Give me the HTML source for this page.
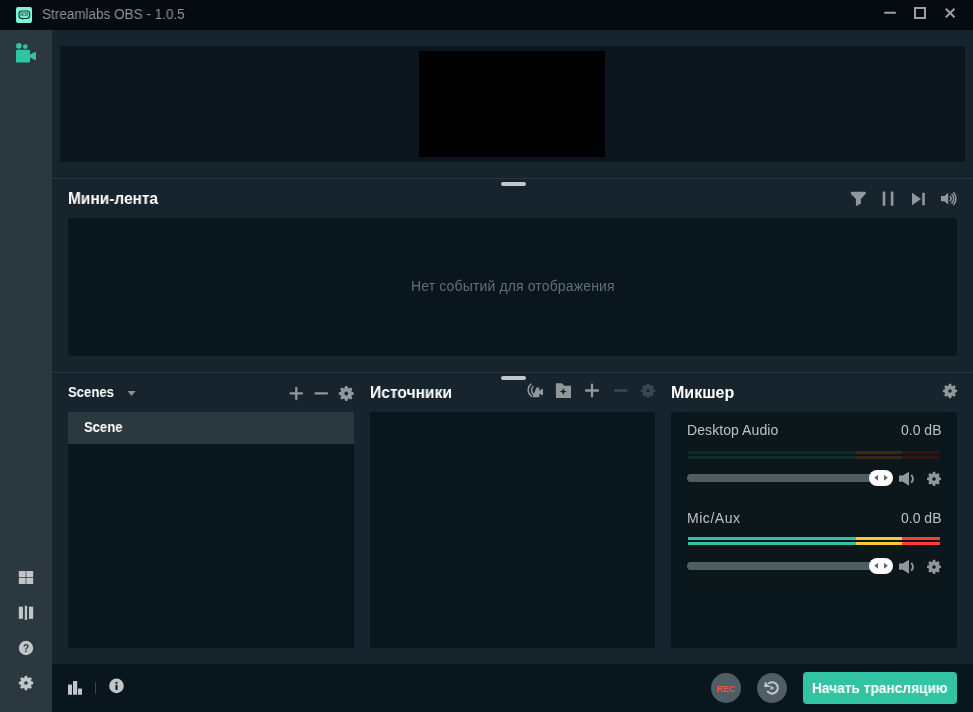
<!DOCTYPE html>
<html>
<head>
<meta charset="utf-8">
<title>Streamlabs OBS</title>
<style>
html,body{margin:0;padding:0;}
body{width:973px;height:712px;overflow:hidden;background:#17242d;font-family:"Liberation Sans",sans-serif;position:relative;color:#fff;}
.abs{position:absolute;}
.t{position:absolute;white-space:nowrap;line-height:1;transform-origin:0 50%;will-change:transform;}
#titlebar{left:0;top:0;width:973px;height:30px;background:#050b10;}
#sidebar{left:0;top:30px;width:52px;height:682px;background:#2b383f;}
#preview{left:60px;top:46px;width:905px;height:116px;background:#0b161c;}
#black{left:419px;top:51px;width:186px;height:106px;background:#000;}
.hline{left:52px;width:921px;height:1px;background:#2a363d;}
.handle{left:500.5px;width:25px;height:4px;border-radius:2px;background:#c2c7c9;}
.box{background:#09161d;border-radius:3px;}
#footer{left:52px;top:664px;width:921px;height:48px;background:#09161d;}
svg{position:absolute;overflow:visible;}
.ic{fill:#91979a;}
.icd{fill:#414d54;}
.icl{fill:#c0c5c7;}
</style>
</head>
<body>
<svg width="0" height="0" style="position:absolute">
<defs>
<path id="gear" fill-rule="evenodd" d="M-0.259 -0.693 L-0.131 -0.991 L0.131 -0.991 L0.259 -0.693 L0.307 -0.673 L0.609 -0.793 L0.793 -0.609 L0.673 -0.307 L0.693 -0.259 L0.991 -0.131 L0.991 0.131 L0.693 0.259 L0.673 0.307 L0.793 0.609 L0.609 0.793 L0.307 0.673 L0.259 0.693 L0.131 0.991 L-0.131 0.991 L-0.259 0.693 L-0.307 0.673 L-0.609 0.793 L-0.793 0.609 L-0.673 0.307 L-0.693 0.259 L-0.991 0.131 L-0.991 -0.131 L-0.693 -0.259 L-0.673 -0.307 L-0.793 -0.609 L-0.609 -0.793 L-0.307 -0.673Z M0.25 0 A0.25 0.25 0 1 0 -0.25 0 A0.25 0.25 0 1 0 0.25 0Z"/>
</defs>
</svg>

<!-- title bar -->
<div class="abs" id="titlebar"></div>
<div class="t" id="title" style="left:41.6px;top:7px;font-size:14px;color:#8e9497;transform:scaleX(0.965);">Streamlabs OBS - 1.0.5</div>

<!-- sidebar -->
<div class="abs" id="sidebar"></div>

<!-- preview -->
<div class="abs" id="preview"></div>
<div class="abs" id="black"></div>

<div class="abs hline" style="top:178px"></div>
<div class="abs handle" style="top:182px"></div>

<!-- mini feed -->
<div class="t" id="minititle" style="left:68.3px;top:191px;font-size:16px;font-weight:bold;transform:scaleX(0.966);">Мини-лента</div>
<div class="abs box" style="left:68px;top:218px;width:889px;height:138px;"></div>
<div class="t" id="noevents" style="left:410.5px;top:279px;font-size:14px;color:#646d72;letter-spacing:0.14px;">Нет событий для отображения</div>

<div class="abs hline" style="top:372px"></div>
<div class="abs handle" style="top:376px"></div>

<!-- scenes -->
<div class="t" id="scenes" style="left:67.8px;top:385px;font-size:14px;font-weight:bold;transform:scaleX(0.936);">Scenes</div>
<div class="abs box" style="left:68px;top:412px;width:286px;height:236px;border-radius:0;"></div>
<div class="abs" style="left:68px;top:412px;width:286px;height:32px;background:#2b383f;"></div>
<div class="t" id="scene" style="left:83.8px;top:420px;font-size:14px;font-weight:bold;transform:scaleX(0.932);">Scene</div>

<!-- sources -->
<div class="t" id="sources" style="left:370.2px;top:385px;font-size:16px;font-weight:bold;transform:scaleX(0.975);">Источники</div>
<div class="abs box" style="left:370px;top:412px;width:285px;height:236px;border-radius:0;"></div>

<!-- mixer -->
<div class="t" id="mixer" style="left:671.3px;top:385px;font-size:16px;font-weight:bold;transform:scaleX(0.995);">Микшер</div>
<div class="abs box" style="left:671px;top:412px;width:286px;height:236px;"></div>
<div class="abs" style="left:688px;top:412px;width:252px;height:176px;background:#0c171c;"></div>

<!-- mixer items -->
<div class="t" id="da" style="left:686.7px;letter-spacing:0.08px;top:423px;font-size:14px;color:#bcc1c3;">Desktop Audio</div>
<div class="t" id="db1" style="right:32px;top:423px;font-size:14px;color:#bcc1c3;">0.0 dB</div>
<div class="t" id="mic" style="left:686.7px;top:511px;font-size:14px;color:#bcc1c3;letter-spacing:0.55px;">Mic/Aux</div>
<div class="t" id="db2" style="right:32px;top:511px;font-size:14px;color:#bcc1c3;">0.0 dB</div>
<svg id="mixsvg" width="973" height="712" viewBox="0 0 973 712" style="left:0;top:0;pointer-events:none">
<!-- meters desktop (dim) -->
<g>
<rect x="688" y="451" width="168" height="3" fill="#0f2b27"/><rect x="856" y="451" width="46" height="3" fill="#372b14"/><rect x="902" y="451" width="38" height="3" fill="#361214"/>
<rect x="688" y="456" width="168" height="3" fill="#0f2b27"/><rect x="856" y="456" width="46" height="3" fill="#372b14"/><rect x="902" y="456" width="38" height="3" fill="#361214"/>
</g>
<!-- meters mic (bright) -->
<g>
<rect x="688" y="537" width="168" height="3" fill="#31c3a2"/><rect x="856" y="537" width="46" height="3" fill="#ffc83c"/><rect x="902" y="537" width="38" height="3" fill="#fc3e3f"/>
<rect x="688" y="542" width="168" height="3" fill="#31c3a2"/><rect x="856" y="542" width="46" height="3" fill="#ffc83c"/><rect x="902" y="542" width="38" height="3" fill="#fc3e3f"/>
</g>
<g id="ctl1">
<rect x="687" y="474" width="195" height="8" rx="4" fill="#4f5e65"/>
<rect x="869" y="470" width="24" height="16" rx="8" fill="#fff"/>
<path d="M874.3 477.8 L878 474.8 V480.8Z M887.9 477.8 L884 474.8 V480.8Z" fill="#5b6a72"/>
<path d="M899 475.6 H902.8 L909 471.7 V485.7 L902.8 481.8 H899Z" class="ic"/>
<path d="M911.2 474.9 A5.2 5.2 0 0 1 911.2 482.7" fill="none" stroke="#91979a" stroke-width="2"/>
<use href="#gear" class="ic" transform="translate(934 478.9) scale(7.1)"/>
</g>
<use href="#ctl1" transform="translate(0 88)"/>
</svg>

<!-- footer -->
<div class="abs" id="footer"></div>

<!-- ICONS OVERLAY -->
<svg id="icons" width="973" height="712" viewBox="0 0 973 712" style="left:0;top:0;pointer-events:none">
<!-- logo -->
<g id="logo">
<rect x="16" y="7" width="16" height="16" rx="2" fill="#80f5d2"/>
<rect x="19" y="11" width="10.6" height="7.3" rx="2.6" fill="none" stroke="#17393a" stroke-width="1.15"/>
<path d="M21.5 18.5 L22.4 20 L23.3 18.5Z" fill="#17393a"/>
<rect x="20.2" y="12.2" width="8.2" height="4.1" rx="1.3" fill="#439f8d"/>
<rect x="23.4" y="13.7" width="1.7" height="1.1" fill="#9af7df"/>
<rect x="21.6" y="16.9" width="5.6" height="0.6" fill="#b5fbe8"/>
</g>
<!-- window controls -->
<g stroke="#9ba0a3" stroke-width="2" fill="none">
<path d="M885 12.7 H895" stroke-linecap="round"/>
<rect x="915" y="8" width="10" height="10"/>
<path d="M945.8 8.8 L954.5 17.2 M954.5 8.8 L945.8 17.2"/>
</g>
<!-- sidebar camera -->
<g fill="#31c3a2">
<circle cx="18.9" cy="45.8" r="2.9"/>
<circle cx="25.3" cy="46.6" r="2.3"/>
<rect x="16" y="49.7" width="14" height="12.7" rx="1.2"/>
<path d="M30 54.6 L34.4 52.2 Q36 51.5 36 53.2 V58.8 Q36 60.5 34.4 59.8 L30 57.5 Z"/>
</g>
<!-- sidebar bottom icons -->
<g fill="#c0c5c7">
<rect x="18.8" y="571" width="6.8" height="6.2"/><rect x="26.3" y="571" width="6.9" height="6.2"/>
<rect x="18.8" y="577.9" width="6.8" height="6.1"/><rect x="26.3" y="577.9" width="6.9" height="6.1"/>
<rect x="18.8" y="606.7" width="4.2" height="12.1"/><rect x="24.8" y="605.8" width="2.3" height="14.1"/><rect x="29" y="606.7" width="4.2" height="12.1"/>
<circle cx="26" cy="648" r="7.2"/>
<use href="#gear" transform="translate(26 683) scale(7.3)"/>
</g>
<text x="26" y="651.6" font-family="Liberation Sans" font-weight="bold" font-size="10" fill="#2b383f" text-anchor="middle">?</text>
<!-- mini feed icons -->
<g class="ic">
<path d="M851.8 191.7 H864.8 Q865.8 191.7 865.8 192.7 V193.2 Q865.8 193.8 865.3 194.3 L860.9 199 V203.4 L857 205.7 Q855.9 206.1 855.9 205 V199 L851.3 194.3 Q850.8 193.8 850.8 193.2 V192.7 Q850.8 191.7 851.8 191.7Z"/>
<rect x="882.7" y="191.6" width="2.6" height="14.2" rx="0.6"/><rect x="890.8" y="191.6" width="2.6" height="14.2" rx="0.6"/>
<path d="M912 192.8 L921 199 L912 205.2Z"/><rect x="922.2" y="192.8" width="2.6" height="12.4" rx="0.5"/>
<path d="M941 196 H944.4 L948.2 192.8 V204.4 L944.4 201.2 H941Z"/>
</g>
<g fill="none" stroke="#91979a" stroke-width="1.55" stroke-linecap="round">
<path d="M950.3 196.6 A2.8 2.8 0 0 1 950.3 200.6"/>
<path d="M951.9 194.3 A6 6 0 0 1 951.9 202.9"/>
<path d="M953.7 192.8 A8.6 8.6 0 0 1 953.7 204.4"/>
</g>
<!-- scenes icons -->
<path d="M127.6 391 H135.6 L131.6 396Z" fill="#8a9094"/>
<g stroke="#91979a" stroke-width="2.3" stroke-linecap="round" fill="none">
<path d="M290.6 393.4 H302 M296.3 387.8 V399"/>
<path d="M315.5 393.4 H327"/>
</g>
<use href="#gear" class="ic" transform="translate(346.3 393.5) scale(7.6)"/>
<!-- sources icons -->
<g class="ic">
<path d="M532.3 397.3 L536.5 387.4 H539.3 V390.7 L543 388.6 V395.6 L539.3 393.7 V397.3Z"/>
<path d="M555.9 383.2 H561.7 L564.5 385.8 H571 V398 H555.9Z"/>
</g>
<g fill="none" stroke="#91979a" stroke-width="1.5" stroke-linecap="round">
<path d="M531 384.1 A7.5 7.5 0 0 0 531.5 396.2"/>
<path d="M533 386.6 A5.6 5.6 0 0 0 533.4 394.4"/>
</g>
<path d="M563.3 388 L564.25 390.55 L566.8 391.5 L564.25 392.45 L563.3 395 L562.35 392.45 L559.8 391.5 L562.35 390.55Z" fill="#17242d"/>
<g stroke="#91979a" stroke-width="2.3" stroke-linecap="round" fill="none">
<path d="M586 390.5 H598 M592 384.6 V396.4"/>
</g>
<path d="M615 390.5 H626.4" stroke="#3b474e" stroke-width="2.3" stroke-linecap="round" fill="none"/>
<use href="#gear" fill="#3b474e" transform="translate(648 390.8) scale(7.2)"/>
<!-- mixer gear -->
<use href="#gear" class="ic" transform="translate(950 391) scale(7.2)"/>
<!-- footer icons -->
<g fill="#c0c5c7">
<rect x="68" y="684.6" width="4" height="10.2" rx="0.6"/><rect x="73" y="680.9" width="4.2" height="13.9" rx="0.6"/><rect x="78" y="688.4" width="4" height="6.4" rx="0.6"/>
<circle cx="116.5" cy="685.9" r="7.3"/>
</g>
<rect x="95" y="682" width="1" height="12" fill="#3a464d"/>
<g fill="#09161d"><circle cx="116.5" cy="682.9" r="1.1"/><rect x="115.5" y="684.9" width="2" height="5"/></g>
<circle cx="726" cy="688" r="15" fill="#4f5e65"/>
<circle cx="772" cy="688" r="15" fill="#4f5e65"/>
<path d="M768.3 683.7 A5.7 5.7 0 1 1 767.2 690.7" fill="none" stroke="#c0c5c7" stroke-width="2.1"/>
<path d="M765 681.4 L764 686.9 L770.2 686.9Z" fill="#c0c5c7"/>
<path d="M770.5 685.6 L774.3 687.9 L770.5 690.2Z" fill="#c0c5c7"/>
<rect x="803" y="672" width="154" height="32" rx="4" fill="#31c3a2"/>
</svg>
<div class="t" id="rec" style="left:716.8px;top:684.6px;font-size:9px;font-weight:bold;color:#f8553c;transform:scaleX(0.97);">REC</div>
<div class="t" id="golive" style="left:811.6px;top:681px;font-size:14px;font-weight:bold;color:#fff;transform:scaleX(0.979);">Начать трансляцию</div>

</body>
</html>
